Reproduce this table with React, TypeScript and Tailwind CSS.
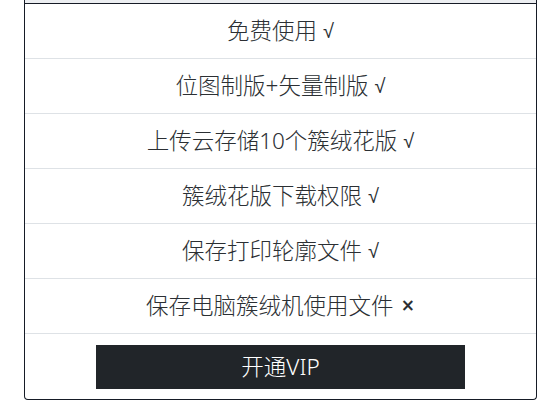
const features: [string, string][] = [
  ['免费使用', '√'],
  ['位图制版+矢量制版', '√'],
  ['上传云存储10个簇绒花版', '√'],
  ['簇绒花版下载权限', '√'],
  ['保存打印轮廓文件', '√'],
  ['保存电脑簇绒机使用文件', '×'],
]

export default function App() {
  return (
    <div
      className="h-[408px] w-[558px] overflow-hidden bg-white"
      style={{ fontFamily: '"Noto Sans", "Noto Sans CJK SC", sans-serif' }}
    >
      <div className="ml-[24px] w-[513px] border-x border-b border-[#161b26] rounded-b-[4px] overflow-hidden">
        <div className="h-[4px] bg-[#eceef1] border-b border-[#161b26]" />
        <ul>
          {features.map(([label, mark]) => (
            <li
              key={label}
              className="h-[55px] border-b border-[#dee2e6] flex items-center justify-center text-[22.5px] font-light text-[#2b2f33]"
            >
              {label}
              <span
                className={
                  mark === '×'
                    ? "ml-[7px] font-['DejaVu_Sans',sans-serif] text-[17px] font-bold"
                    : "ml-[6px] font-['Liberation_Sans',sans-serif] text-[20px] font-normal"
                }
              >
                {mark}
              </span>
            </li>
          ))}
        </ul>
        <div className="pt-[11px] pb-[10px] flex justify-center">
          <button className="w-[369px] h-[44px] bg-[#212529] text-white text-[22.5px] font-light flex items-center justify-center">
            开通VIP
          </button>
        </div>
      </div>
    </div>
  )
}
